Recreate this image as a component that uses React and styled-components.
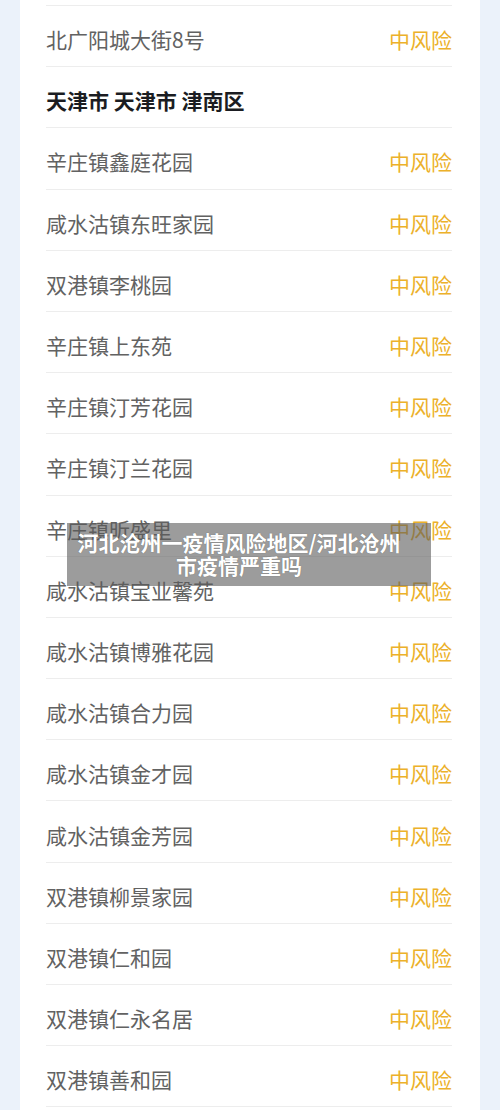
import styled, { createGlobalStyle } from 'styled-components';

const rows = [
  { name: '北广阳城大街8号', risk: '中风险' },
  { name: '天津市 天津市 津南区', header: true },
  { name: '辛庄镇鑫庭花园', risk: '中风险' },
  { name: '咸水沽镇东旺家园', risk: '中风险' },
  { name: '双港镇李桃园', risk: '中风险' },
  { name: '辛庄镇上东苑', risk: '中风险' },
  { name: '辛庄镇汀芳花园', risk: '中风险' },
  { name: '辛庄镇汀兰花园', risk: '中风险' },
  { name: '辛庄镇昕盛里', risk: '中风险' },
  { name: '咸水沽镇宝业馨苑', risk: '中风险' },
  { name: '咸水沽镇博雅花园', risk: '中风险' },
  { name: '咸水沽镇合力园', risk: '中风险' },
  { name: '咸水沽镇金才园', risk: '中风险' },
  { name: '咸水沽镇金芳园', risk: '中风险' },
  { name: '双港镇柳景家园', risk: '中风险' },
  { name: '双港镇仁和园', risk: '中风险' },
  { name: '双港镇仁永名居', risk: '中风险' },
  { name: '双港镇善和园', risk: '中风险' },
];

export default function App() {
  return (
    <>
      <GlobalStyle />
      <Page>
        <Card>
          <List>
            {rows.map((row) => (
              <Row key={row.name}>
                <Name $header={row.header}>{row.name}</Name>
                {row.risk && <Risk>{row.risk}</Risk>}
              </Row>
            ))}
          </List>
        </Card>
        <Caption>河北沧州一疫情风险地区/河北沧州市疫情严重吗</Caption>
      </Page>
    </>
  );
}

const GlobalStyle = createGlobalStyle`
  html, body {
    margin: 0;
    padding: 0;
    overflow: hidden;
    background: #eaf2fa;
  }
  body {
    font-family: "Noto Sans CJK SC", "Noto Sans", sans-serif;
  }
`;

const Page = styled.div`
  position: relative;
  height: 1110px;
  overflow: hidden;
  background: #ebf2fa;
`;

const Card = styled.div`
  margin: 0 20px;
  height: 100%;
  box-sizing: border-box;
  padding: 5px 28px 0 26px;
  background: #fff;
`;

const List = styled.div`
  border-top: 1px solid #ededed;
`;

const Row = styled.div`
  height: 61.2px;
  box-sizing: border-box;
  padding-top: 7px;
  display: flex;
  align-items: center;
  justify-content: space-between;
  border-bottom: 1px solid #ededed;
`;

const Name = styled.span`
  font-size: 21px;
  line-height: 1;
  font-weight: ${(p) => (p.$header ? 700 : 400)};
  color: ${(p) => (p.$header ? '#1b1d22' : '#626262')};
`;

const Risk = styled.span`
  font-size: 21px;
  line-height: 1;
  color: #ecb12a;
`;

const Caption = styled.div`
  position: absolute;
  top: 523px;
  left: 67px;
  width: 364px;
  height: 63px;
  box-sizing: border-box;
  padding: 8px 27px 8px 7px;
  background: rgba(90, 90, 90, 0.6);
  color: #fff;
  font-size: 21px;
  font-weight: 700;
  line-height: 23px;
  text-align: center;
  text-shadow: 0 0 1px rgba(0, 0, 0, 0.4);
`;
